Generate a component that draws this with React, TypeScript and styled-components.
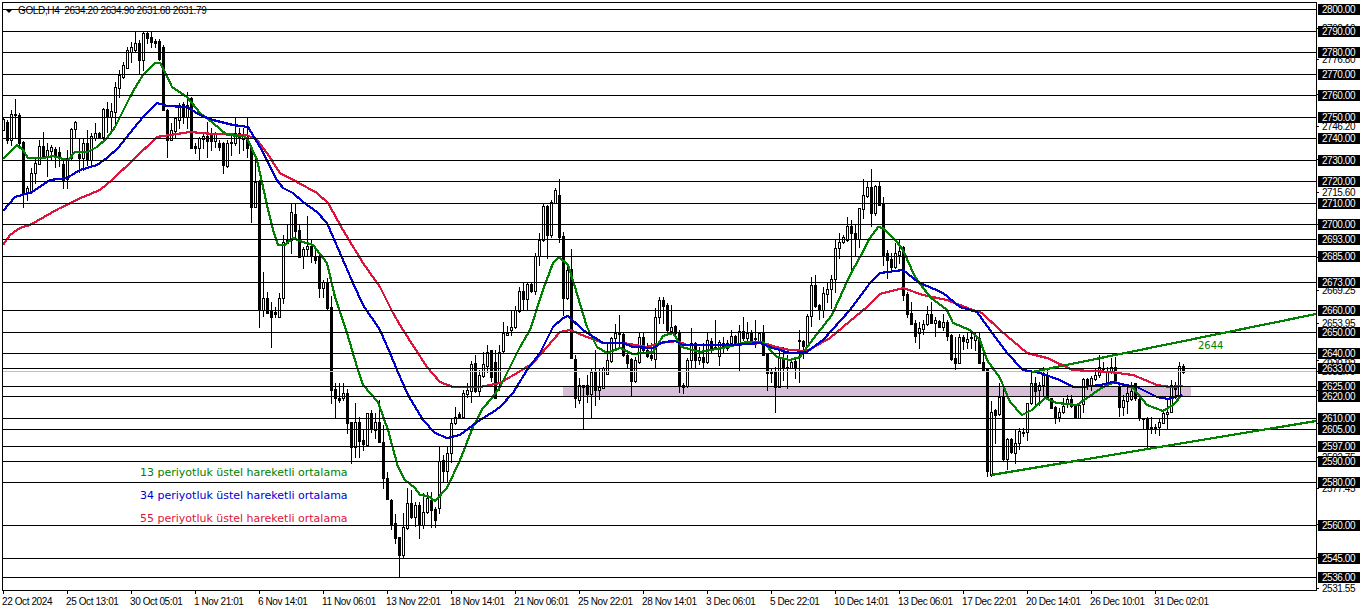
import React from "react";
import styled, { createGlobalStyle } from "styled-components";

const GlobalStyle = createGlobalStyle`
  html, body { margin: 0; padding: 0; background: #ffffff; }
  body { font-family: "Liberation Sans", Arial, sans-serif; overflow: hidden; }
`;

const Page = styled.div`
  width: 1362px;
  height: 611px;
  box-sizing: border-box;
  padding: 2px 0 0 2px;
  background: #ffffff;
`;
const ChartRow = styled.div`
  display: flex;
  height: 589px;
`;
const ChartFrame = styled.div`
  position: relative;
  box-sizing: border-box;
  width: 1315px;
  height: 589px;
  border: 1px solid #000000;
`;
const PlotSvg = styled.svg`
  display: block;
  width: 1313px;
  height: 587px;
  shape-rendering: crispEdges;
`;
const Header = styled.div`
  position: absolute;
  left: 2px;
  top: 1px;
  display: flex;
  align-items: center;
  gap: 5px;
  height: 13px;
  font-size: 10px;
  letter-spacing: -0.35px;
  white-space: pre;
  color: #000000;
`;
const Caret = styled.span`
  width: 0;
  height: 0;
  border-left: 4px solid transparent;
  border-right: 4px solid transparent;
  border-top: 4px solid #000000;
`;
const Legend = styled.div`
  position: absolute;
  left: 137px;
  top: 463px;
  display: flex;
  flex-direction: column;
  gap: 10px;
`;
const LegendLine = styled.div<{ $color: string }>`
  font-family: "DejaVu Sans", sans-serif;
  font-size: 11px;
  line-height: 13px;
  white-space: nowrap;
  color: ${(p) => p.$color};
`;
const Annotation = styled.div`
  position: absolute;
  left: 1195px;
  top: 336px;
  font-family: "DejaVu Sans", sans-serif;
  font-size: 10px;
  line-height: 13px;
  color: #008000;
`;
const PriceAxis = styled.div`
  position: relative;
  width: 45px;
  height: 589px;
`;
const PriceLabel = styled.div<{ $boxed?: boolean }>`
  position: absolute;
  left: ${(p) => (p.$boxed ? "1px" : "0")};
  box-sizing: border-box;
  width: ${(p) => (p.$boxed ? "42px" : "43px")};
  height: 11px;
  padding-left: ${(p) => (p.$boxed ? "4px" : "5px")};
  font-size: 10px;
  line-height: 11px;
  letter-spacing: -0.45px;
  white-space: nowrap;
  color: ${(p) => (p.$boxed ? "#ffffff" : "#000000")};
  background: ${(p) => (p.$boxed ? "#000000" : "transparent")};
`;
const AxisTick = styled.span`
  position: absolute;
  left: 0;
  top: 5px;
  width: 2px;
  height: 1px;
  background: #000000;
`;
const TimeAxis = styled.div`
  display: flex;
`;
const TimeItem = styled.div`
  flex: 0 0 64px;
  display: flex;
  flex-direction: column;
`;
const TimeTick = styled.span`
  width: 1px;
  height: 3px;
  margin-left: 1px;
  background: #000000;
`;
const TimeLabel = styled.span`
  margin-top: 2px;
  font-size: 10px;
  line-height: 12px;
  letter-spacing: -0.4px;
  white-space: nowrap;
  color: #000000;
`;

type Candle = { hollow: boolean; t: number; b: number; hi: number; lo: number };
const candles: (Candle & { k: number })[] = [];
const addSection = (startK: number, oy: number, scale: number, src: string) => {
  src
    .split(";")
    .map((s) => s.trim())
    .filter(Boolean)
    .forEach((row, i) => {
      const [type, t, b, hi, lo] = row.split(/\s+/);
      const conv = (v: string) => Math.round(oy + Number(v) / scale);
      candles.push({
        k: startK + i,
        hollow: type === "h",
        t: conv(t),
        b: conv(b),
        hi: conv(hi),
        lo: conv(lo),
      });
    });
};

addSection(0, 0, 1, `
h 119 130 118 130;b 122 140 120 143;h 114 140 110 145;b 114 115 99 137;b 115 143 113 147;
b 142 193 141 207;h 188 193 186 200;h 173 192 168 193;h 163 173 158 183;h 146 164 140 164;
b 146 156 132 158;h 150 156 143 176;h 147 151 145 160;b 149 155 147 167;b 152 157 147 166;
b 164 180 160 188;h 158 179 150 188;h 129 158 128 160;h 122 129 121 138;b 154 158 138 172;
h 143 158 139 170;b 143 160 130 165;h 136 160 133 165;h 133 138 123 140;b 133 137 132 137;
h 109 137 108 140;b 109 117 102 132;h 111 117 103 130;h 87 112 82 127;h 75 88 70 97;
h 65 77 62 78;h 50 68 47 68;h 47 52 42 62;h 43 50 32 52;b 43 60 40 73;
h 33 60 32 70;b 33 38 32 43;b 37 42 32 47;b 41 43 39 47;b 41 59 39 60;
b 47 110 45 110;b 110 140 109 157;h 130 140 123 140;h 118 131 117 138;h 105 120 103 128;
b 104 117 102 123;h 105 117 92 128;b 98 148 97 148;b 146 148 143 153;h 138 148 137 160;
h 136 139 132 148;b 136 141 122 157;b 133 141 128 150;h 134 141 132 147;b 143 147 140 150;
b 143 165 142 173;h 143 166 140 167;b 142 143 133 155;h 133 143 117 145;b 133 138 128 153;
h 135 139 128 150;b 137 148 117 157;b 148 207 145 222;h 182 207 157 207;b 182 310 180 327;
h 298 310 272 316;b 298 313 292 313;b 310 317 302 347;b 312 314 307 317;h 298 317 293 317;
h 242 298 235 303;h 240 243 225 243;h 212 240 204 253;b 214 231 204 237;b 230 257 225 257;
h 249 256 247 268;h 246 249 216 255;b 246 256 240 262;b 256 260 248 263;b 256 288 255 297;
h 282 288 280 297;b 282 308 278 310;b 307 390 296 403;b 389 398 383 418;b 398 400 383 402;
h 393 398 383 400;b 393 423 389 433;b 422 447 422 463;h 422 447 403 457;b 422 441 417 457;
b 440 444 430 450;h 413 445 413 446;b 413 429 410 432;h 422 430 413 438;b 422 442 400 442;
b 442 478 425 488;b 478 499 472 499;b 500 524 499 529;b 523 538 514 543;b 537 555 537 577;
h 527 555 513 558;h 503 528 488 529;b 503 517 490 518;h 505 517 502 526;b 505 525 502 538;
h 512 525 493 528;h 498 512 492 513;b 500 510 492 527;b 509 520 507 527;h 461 508 447 513;
b 460 471 455 482;h 453 471 446 482;h 423 453 419 462;h 417 423 407 424;b 414 417 412 418;
h 393 417 390 418;h 390 394 383 397;h 364 391 361 402;b 363 391 355 392;h 375 391 370 396;
h 364 376 352 377;h 352 366 345 372;b 350 377 350 381;b 362 398 350 398;h 352 383 345 390
`);

addSection(125, 170, 3, `
h 490 542 455 550;h 488 495 468 495;h 472 480 420 495;h 420 472 408 475;h 362 422 350 425;
b 362 388 340 418;h 342 388 338 418;b 342 362 340 365;h 258 362 250 372;h 210 258 190 285;
h 108 210 100 213;b 108 195 105 265;h 95 195 90 200;h 60 100 55 100;b 75 200 28 215;
b 198 385 185 435;h 300 385 280 388;b 298 565 238 565;b 568 685 555 710;h 645 690 625 700;
b 645 650 645 778;b 645 672 615 695;h 605 672 598 740;b 605 660 540 705;h 650 660 595 688;
h 595 655 590 655;h 570 612 520 612;h 505 572 500 575;h 490 505 462 540;b 490 493 435 530;
b 492 555 490 558;b 555 578 545 590;b 568 632 565 678;h 570 632 560 635;h 500 575 490 578;
b 500 540 490 545;b 540 558 520 560;b 555 565 520 570;h 442 568 415 595;h 390 442 382 460;
b 390 408 382 458;b 405 480 400 490;h 472 482 405 485;b 468 490 465 492;b 485 648 480 665;
b 645 650 640 670;h 570 648 565 650;h 518 570 475 595;b 518 570 515 590;h 562 570 530 582;
b 560 575 520 595;h 510 575 490 578;b 512 540 505 545;b 530 535 450 535;h 515 558 510 585;
b 520 530 500 545;h 518 535 510 540;h 498 520 480 525;b 498 522 495 525;h 484 518 465 602;
b 484 505 442 510;h 490 505 455 515;b 490 510 480 515;b 505 508 450 530;h 490 515 485 520;
b 490 555 465 555;b 552 610 550 660;b 603 610 595 635;b 605 650 590 725;h 565 650 530 652;
b 565 590 530 630;b 590 593 555 655;h 575 595 565 595;b 572 595 565 625;b 510 513 480 635
`);

addSection(200, 160, 3, `
b 542 558 540 595;h 468 558 462 560;h 375 468 352 498;b 375 438 345 442;b 435 450 432 478;
h 400 450 382 470;h 388 402 365 425;h 358 388 345 445;h 265 358 240 395;h 247 265 220 295;
h 232 245 225 248;h 198 240 170 242;b 198 220 180 340;b 220 238 195 285;h 145 238 145 260;
h 105 147 58 175;h 80 108 65 110;b 82 158 28 198;h 78 160 75 165;b 78 135 65 135;
b 130 285 110 315;b 280 300 270 355;b 298 322 280 330;h 280 320 248 325;h 272 285 240 310;
b 260 405 258 420;b 402 462 395 470;b 458 492 425 492;b 488 528 480 545;h 505 520 485 565;
h 492 507 480 522;h 462 492 438 495;b 462 488 425 490;h 480 488 470 528;b 482 500 480 500;
h 487 500 462 510;b 487 528 480 540;b 525 597 522 600;b 595 608 530 628;h 532 608 522 610;
b 530 542 525 568;h 538 545 515 565;b 530 533 518 565;h 528 540 515 570;b 535 608 520 608;
b 605 630 578 630
`);

addSection(246, 330, 3, `
b 115 422 115 437;h 245 435 213 437;b 240 255 237 340;h 200 252 160 255;b 200 387 172 390;
h 327 387 325 417;b 327 365 325 368;h 338 368 300 398;h 303 340 295 358;b 305 310 295 318;
h 220 305 220 330;h 160 220 130 222;b 160 182 142 222;h 165 180 155 225;h 135 165 110 195;
b 135 205 118 207;b 205 235 205 235;b 232 262 228 278;h 247 262 235 272;h 227 245 205 250;
h 207 220 195 230;b 207 228 195 232;b 225 265 222 265;h 225 265 222 265;h 148 222 143 245;
b 148 165 143 178;h 145 165 138 180;h 135 148 118 150;h 110 135 75 140;b 113 118 95 120;
h 122 160 110 165;h 110 125 85 130;b 110 155 82 160;b 168 230 160 258;h 210 230 195 255;
h 190 212 165 248;h 182 208 155 210;b 160 205 160 210;b 207 265 200 270;b 265 268 265 298;
b 263 297 260 350;b 290 293 262 310;b 290 293 282 308;h 275 290 265 315;h 250 278 240 280;
h 245 253 205 298;h 165 245 150 247;b 165 178 155 205;h 108 200 97 200;b 108 125 103 128
`);

const candleX = (k: number) => 3 + 4 * k;

const pts = (s: string) => s.trim().replace(/\s+/g, " ");

const greenMA = pts(`
3,159 17,145 23,150 28,158 43,158 53,156 63,159 68,160 75,152 87,152 97,147 107,138 115,127 125,107 130,97
135,88 143,75 155,63 160,63 165,72 172,87 187,97 200,113 213,123 227,135 243,136 247,138 257,160 267,205
273,230 278,245 285,245 293,238 303,242 313,245 327,263 335,297 347,333 357,367 363,385 378,402 388,430
398,467 405,480 415,488 420,495 428,496 435,501 447,488 460,460 473,427 483,408 492,398 500,387 520,347
530,330 543,290 553,263 559,257 568,265 575,287 587,327 597,347 607,353 620,348 633,354 653,352 663,336
673,333 682,347 700,352 727,347 747,342 763,342 777,357 790,360 800,357 810,343 832,315 850,275 860,257
870,238 878,227 883,228 897,242 903,250 915,277 930,297 947,310 953,323 970,330 980,340 987,360 1000,378
1010,402 1022,415 1032,410 1045,398 1057,403 1077,405 1087,398 1103,387 1115,382 1133,388 1147,405
1163,411 1173,405 1182,395`);

const blueMA = pts(`
3,211 15,197 32,192 50,180 67,178 80,170 97,165 107,158 118,148 130,133 143,117 157,103 167,106 187,107
200,115 213,120 233,125 248,127 260,147 277,180 283,188 293,193 303,202 317,212 327,223 340,253 353,283
363,305 380,330 390,353 397,370 408,395 423,420 435,433 447,438 460,435 480,420 493,412 500,407 513,393
527,370 540,353 553,327 563,318 568,316 583,330 603,343 623,343 633,347 653,348 663,342 675,341 683,345
733,345 760,343 773,348 790,353 807,352 823,340 850,310 870,283 880,273 903,270 918,282 943,293 960,307
977,312 990,330 1007,353 1023,370 1040,373 1060,380 1073,387 1083,387 1100,385 1113,382 1120,384 1137,387
1157,397 1168,399 1182,395`);

const redMA = pts(`
3,245 10,235 20,228 30,225 58,209 83,197 100,190 113,179 133,160 157,137 170,135 190,132 213,134 247,135
257,140 267,153 280,173 297,182 317,193 328,203 343,230 363,263 380,287 393,313 403,330 427,367 440,382
453,387 480,387 500,383 517,373 533,363 547,347 560,332 570,330 587,337 603,343 623,343 647,347 660,343
677,341 687,345 733,345 763,343 780,348 790,350 807,351 830,338 843,327 867,307 880,294 903,288 923,295
947,300 970,309 982,313 1000,330 1027,353 1047,358 1073,370 1110,372 1133,375 1157,385 1170,387 1183,386`);

const lineYs = [
  9, 31, 52, 74, 95, 117, 138, 160, 181, 203, 224, 239, 256, 282, 310, 332, 353, 368, 386, 396, 418, 429,
  446, 461, 482, 525, 558, 577,
];

const boxedLabels: [string, number][] = [
  ["2800.00", 9], ["2790.00", 31], ["2780.00", 52], ["2770.00", 74], ["2760.00", 95], ["2750.00", 117],
  ["2740.00", 138], ["2730.00", 160], ["2720.00", 181], ["2710.00", 203], ["2700.00", 224], ["2693.00", 239],
  ["2685.00", 256], ["2673.00", 282], ["2660.00", 310], ["2650.00", 332], ["2640.00", 353], ["2633.00", 368],
  ["2625.00", 386], ["2620.00", 396], ["2610.00", 418], ["2605.00", 429], ["2597.00", 446], ["2590.00", 461],
  ["2580.00", 482], ["2560.00", 525], ["2545.00", 558], ["2536.00", 577],
];
const plainLabels: [string, number][] = [
  ["2792.10", 28], ["2776.80", 59], ["2761.50", 94], ["2746.20", 126], ["2730.90", 159], ["2715.60", 192],
  ["2700.30", 224], ["2684.95", 257], ["2669.25", 290], ["2653.95", 323], ["2638.65", 360], ["2631.79", 371],
  ["2623.35", 390], ["2608.05", 423], ["2592.75", 457], ["2577.45", 488], ["2562.15", 524], ["2546.85", 557],
  ["2531.55", 588],
];
const timeLabels = [
  "22 Oct 2024", "25 Oct 13:01", "30 Oct 05:01", "1 Nov 21:01", "6 Nov 14:01", "11 Nov 06:01", "13 Nov 22:01",
  "18 Nov 14:01", "21 Nov 06:01", "25 Nov 22:01", "28 Nov 14:01", "3 Dec 06:01", "5 Dec 22:01", "10 Dec 14:01",
  "13 Dec 06:01", "17 Dec 22:01", "20 Dec 14:01", "26 Dec 10:01", "31 Dec 02:01",
];

const CandleMark: React.FC<{ c: Candle & { k: number } }> = ({ c }) => {
  const x = candleX(c.k);
  const h = Math.max(1, c.b - c.t + 1);
  return (
    <g>
      <rect x={x} y={c.hi} width={1} height={Math.max(1, c.lo - c.hi + 1)} fill="#000" />
      <rect x={x - 1} y={c.t} width={3} height={h} fill="#000" />
      {c.hollow && h > 2 && <rect x={x} y={c.t + 1} width={1} height={h - 2} fill="#fff" />}
    </g>
  );
};

export default function App() {
  return (
    <Page>
      <GlobalStyle />
      <ChartRow>
        <ChartFrame>
          <PlotSvg viewBox="3 3 1313 587">
            <rect x={563} y={386} width={628} height={11} fill="#d8bfd8" />
            {candles.map((c) => (
              <CandleMark key={c.k} c={c} />
            ))}
            <rect x={3} y={371} width={1313} height={1} fill="#c0c0c0" />
            <polyline points={redMA} fill="none" stroke="#dc143c" strokeWidth={2.2} strokeLinejoin="round" />
            <polyline points={greenMA} fill="none" stroke="#008000" strokeWidth={2.2} strokeLinejoin="round" />
            <polyline points={blueMA} fill="none" stroke="#0000cd" strokeWidth={2.2} strokeLinejoin="round" />
            {lineYs.map((y) => (
              <rect key={y} x={3} y={y} width={1313} height={1} fill="#000" />
            ))}
            <line x1={1032} y1={372} x2={1316} y2={314} stroke="#008000" strokeWidth={2.2} />
            <line x1={991} y1={475} x2={1316} y2={421} stroke="#008000" strokeWidth={2.2} />
          </PlotSvg>
          <Header>
            <Caret />
            <span>GOLD,H4  2634.20 2634.90 2631.68 2631.79</span>
          </Header>
          <Legend>
            <LegendLine $color="#008000">13 periyotluk üstel hareketli ortalama</LegendLine>
            <LegendLine $color="#0000cd">34 periyotluk üstel hareketli ortalama</LegendLine>
            <LegendLine $color="#dc143c">55 periyotluk üstel hareketli ortalama</LegendLine>
          </Legend>
          <Annotation>2644</Annotation>
        </ChartFrame>
        <PriceAxis>
          {plainLabels.map(([text, y]) => (
            <PriceLabel key={text} style={{ top: y - 7 }}>
              <AxisTick />
              {text}
            </PriceLabel>
          ))}
          {boxedLabels.map(([text, y]) => (
            <PriceLabel key={text} $boxed style={{ top: y - 7 }}>
              {text}
            </PriceLabel>
          ))}
        </PriceAxis>
      </ChartRow>
      <TimeAxis>
        {timeLabels.map((t) => (
          <TimeItem key={t}>
            <TimeTick />
            <TimeLabel>{t}</TimeLabel>
          </TimeItem>
        ))}
      </TimeAxis>
    </Page>
  );
}
